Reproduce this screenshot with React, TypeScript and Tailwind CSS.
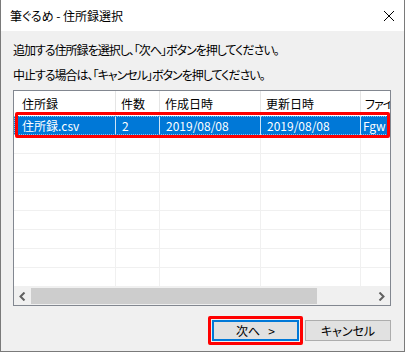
import React from "react";

const F = "font-['Noto_Sans_CJK_JP','Noto_Sans',sans-serif] [font-feature-settings:'palt']";

const cols = ["w-[102px]", "w-[44px]", "w-[101px]", "w-[100px]", "flex-1"];

function Row({ selected, cells }: { selected?: boolean; cells?: string[] }) {
  return (
    <div
      className={
        "relative flex h-[19px] shrink-0 " +
        (selected ? "bg-[#0078d7] text-white" : "border-b border-[#f0f0f0]")
      }
    >
      {cols.map((c, i) => (
        <div
          key={i}
          className={
            c +
            " h-full shrink-0 overflow-hidden whitespace-nowrap flex items-center " +
            (i < 4 ? (selected ? "border-r border-[#cfe4f6] " : "border-r border-[#f0f0f0] ") : "") +
            (i === 0 ? "pl-[8px]" : i === 4 ? "pl-[2px]" : "pl-[6px]")
          }
        >
          {cells ? <span className="text-[12px] leading-[16px]">{cells[i]}</span> : null}
        </div>
      ))}
      {selected ? (
        <div className="pointer-events-none absolute inset-0 border border-dotted border-[#8cc2ef]" />
      ) : null}
    </div>
  );
}

export default function App() {
  const headers = ["住所録", "件数", "作成日時", "更新日時", "ファイ"];
  return (
    <div className={"w-[405px] h-[352px] flex flex-col border-x border-b border-[#7a7a7a] bg-[#f0f0f0] text-black " + F}>
      {/* title bar */}
      <div className="h-[31px] shrink-0 bg-white flex items-center justify-between pl-[9px] pr-[9px]">
        <span className="text-[12px] leading-[16px]">筆ぐるめ - 住所録選択</span>
        <svg width="12" height="12" viewBox="0 0 12 12">
          <path d="M1 1 L11 11 M11 1 L1 11" stroke="#000" strokeWidth="1" />
        </svg>
      </div>
      {/* body */}
      <div className="flex flex-col pl-[12px]">
        <p className="mt-[11px] text-[12px] leading-[16px] tracking-[-1px]">追加する住所録を選択し、「次へ」ボタンを押してください。</p>
        <p className="mt-[9px] text-[12px] leading-[16px] tracking-[-1px]">中止する場合は、「キャンセル」ボタンを押してください。</p>
        {/* list */}
        <div className="relative mt-[7px] w-[378px] h-[216px] border border-[#828790] bg-white flex flex-col">
          <div className="flex h-[25px] shrink-0">
            {headers.map((h, i) => (
              <div
                key={i}
                className={
                  cols[i] +
                  " h-full shrink-0 overflow-hidden whitespace-nowrap flex items-center " +
                  (i < 4 ? "border-r border-[#e5e5e5] " : "") +
                  (i === 0 ? "pl-[8px]" : i === 4 ? "pl-[4px] tracking-[-1px]" : "pl-[5px]")
                }
              >
                <span className="text-[12px] leading-[16px]">{h}</span>
              </div>
            ))}
          </div>
          <Row selected cells={["住所録.csv", "2", "2019/08/08", "2019/08/08", "Fgw"]} />
          {Array.from({ length: 8 }).map((_, i) => (
            <Row key={i} />
          ))}
          <div className="flex-1" />
          {/* horizontal scrollbar */}
          <div className="h-[18px] shrink-0 flex items-stretch bg-[#f0f0f0]">
            <div className="w-[17px] flex items-center justify-center">
              <svg width="7" height="9" viewBox="0 0 7 9">
                <path d="M5.5 0.5 L1.5 4.5 L5.5 8.5" stroke="#606060" strokeWidth="2" fill="none" />
              </svg>
            </div>
            <div className="w-[286px] my-[1px] bg-[#cdcdcd]" />
            <div className="flex-1" />
            <div className="w-[17px] flex items-center justify-center">
              <svg width="7" height="9" viewBox="0 0 7 9">
                <path d="M1.5 0.5 L5.5 4.5 L1.5 8.5" stroke="#606060" strokeWidth="2" fill="none" />
              </svg>
            </div>
          </div>
          {/* red annotation around selected row */}
          <div className="pointer-events-none absolute left-[1px] top-[21px] w-[375px] h-[26px] border-[3px] border-[#ff0000] rounded-[2px]" />
        </div>
        {/* buttons */}
        <div className="relative mt-[14px] w-[378px] flex justify-end gap-[6px]">
          <div className="w-[87px] h-[21px] border-2 border-[#0078d7] bg-[#e1e1e1] flex items-center justify-center">
            <span className="text-[12px] leading-[16px] whitespace-pre">次へ   &gt;</span>
          </div>
          <div className="w-[86px] h-[21px] border border-[#adadad] bg-[#e1e1e1] flex items-center justify-center">
            <span className="text-[12px] leading-[16px]">キャンセル</span>
          </div>
          <div className="pointer-events-none absolute left-[195px] top-[-4px] w-[95px] h-[29px] border-[3px] border-[#ff0000] rounded-[2px]" />
        </div>
      </div>
    </div>
  );
}
